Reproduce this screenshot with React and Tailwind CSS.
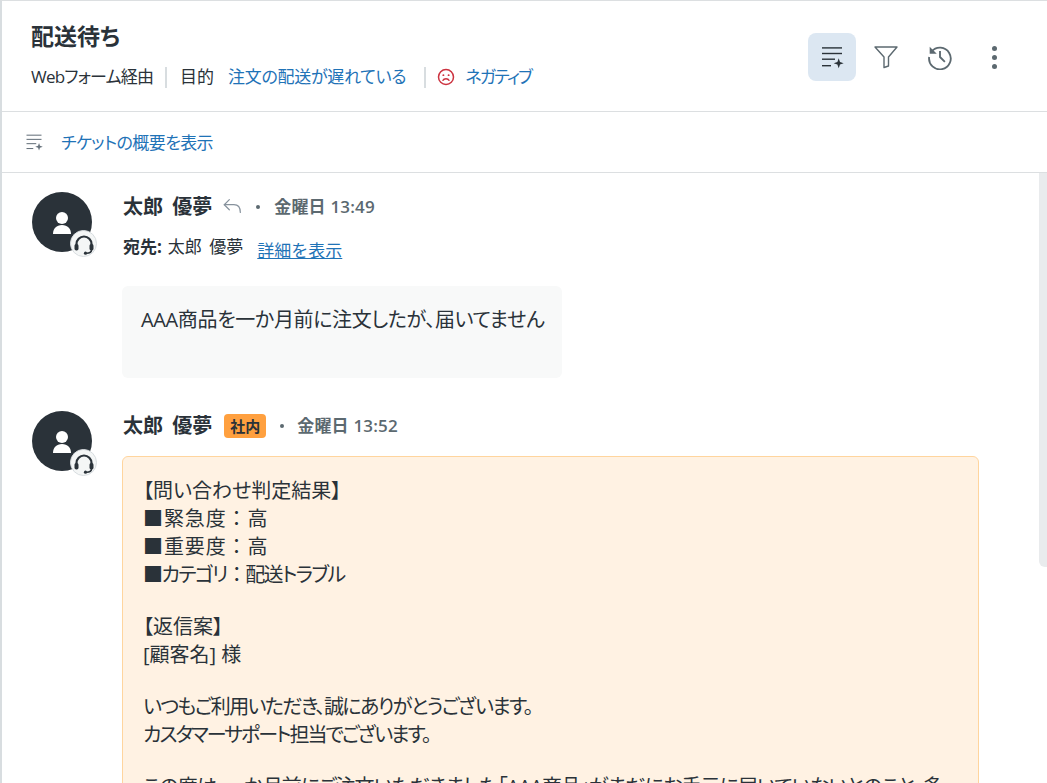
const jp = '[font-family:"Open_Sans","Noto_Sans_CJK_JP",sans-serif] [font-feature-settings:"palt"]';

function SummaryIcon({ className }) {
  return (
    <svg viewBox="0 0 24 24" className={className} fill="currentColor">
      <rect x="2" y="2.200" width="20" height="1.400" />
      <rect x="2" y="7.800" width="20" height="1.400" />
      <rect x="2" y="13.500" width="13" height="1.400" />
      <rect x="2" y="20" width="9" height="1.400" />
      <path d="M18.700 13.300l1.300 3.700 3.700 1.300-3.700 1.300-1.300 3.700-1.300-3.700-3.700-1.300 3.700-1.300z" />
    </svg>
  );
}

function Avatar() {
  return (
    <div className="relative w-[60px] h-[60px] rounded-full bg-[#2a3239] flex items-center justify-center shrink-0">
      <svg viewBox="0 0 24 24" className="w-[24px] h-[24px] mt-[1px]" fill="#fff">
        <circle cx="12" cy="7" r="6" />
        <path d="M3 23c0-5.500 3.500-9 9-9s9 3.500 9 9z" />
      </svg>
      <div className="absolute left-[38px] top-[38px] w-[27px] h-[27px] rounded-full bg-[#f4f6f6] border border-[#d8dde0] flex items-center justify-center">
        <svg viewBox="0 0 24 24" className="w-[24px] h-[24px]" fill="none" stroke="#2a3239" strokeWidth="2.200">
          <path d="M4.500 15v-3a7.500 7.500 0 0 1 15 0v3" />
          <rect x="2.500" y="12" width="4" height="6.500" rx="1.800" fill="#2a3239" stroke="none" />
          <rect x="17.500" y="12" width="4" height="6.500" rx="1.800" fill="#2a3239" stroke="none" />
          <path d="M19.500 18c0 2.200-2 3.200-5 3.200" strokeWidth="1.600" />
          <circle cx="13.500" cy="21.200" r="1.600" fill="#2a3239" stroke="none" />
        </svg>
      </div>
    </div>
  );
}

const Colon = () => <span className="[font-feature-settings:normal]">：</span>;

export default function App() {
  return (
    <div className={`${jp} w-[1047px] h-[783px] overflow-hidden bg-white border-t border-t-[#dcdfe1] border-l-2 border-l-[#d8dde0] flex flex-col text-[#2a3239]`}>
      <div className="h-[111px] shrink-0 border-b border-[#dcdfe1] flex justify-between pl-[29px] pr-[29px]">
        <div>
          <h1 className="mt-[19px] text-[23px] leading-[33px] font-bold">配送待ち</h1>
          <div className="mt-[11px] flex items-center text-[17px] leading-[26px] whitespace-nowrap">
            <span className="tracking-[-0.8px]">Webフォーム経由</span>
            <span className="w-[2px] h-[21px] bg-[#d8dde0] ml-[12px] mr-[13px]"></span>
            <span>目的</span>
            <span className="ml-[14px] text-[#1f73b7] tracking-[-0.3px]">注文の配送が遅れている</span>
            <span className="w-[2px] h-[21px] bg-[#d8dde0] ml-[18px] mr-[11px]"></span>
            <svg viewBox="0 0 24 24" className="w-[18px] h-[18px]" fill="none" stroke="#cc3340" strokeWidth="2">
              <circle cx="12" cy="12" r="10" />
              <path d="M7.500 17c1-1.800 2.600-2.800 4.500-2.800s3.500 1 4.500 2.800" />
              <circle cx="8.500" cy="9.500" r="1.300" fill="#cc3340" stroke="none" />
              <circle cx="15.500" cy="9.500" r="1.300" fill="#cc3340" stroke="none" />
            </svg>
            <span className="ml-[10px] text-[#1f73b7] tracking-[-1.8px]">ネガティブ</span>
          </div>
        </div>
        <div className="mt-[32px] flex items-start">
          <button className="w-[48px] h-[48px] rounded-[8px] bg-[#dce7f2] flex items-center justify-center text-[#2a3239]">
            <SummaryIcon className="w-[24px] h-[24px]" />
          </button>
          <button className="w-[48px] h-[48px] ml-[6px] flex items-center justify-center text-[#5c6970]">
            <svg viewBox="0 0 24 24" className="w-[24px] h-[24px]" fill="none" stroke="currentColor" strokeWidth="1.400" strokeLinejoin="round">
              <path d="M1 2h22l-8.500 10v9l-4.500 1.500V12z" />
            </svg>
          </button>
          <button className="w-[48px] h-[48px] ml-[6px] flex items-center justify-center text-[#5c6970]">
            <svg viewBox="0 0 24 24" className="w-[26px] h-[26px]" fill="none" stroke="currentColor" strokeWidth="1.700">
              <path d="M4.200 7A10 10 0 1 1 2 12" />
              <path d="M2.500 2.500v6.500h6.500z" fill="currentColor" stroke="none" />
              <path d="M12 6.500V12l4.500 4.500" />
            </svg>
          </button>
          <button className="w-[48px] h-[48px] ml-[6px] flex flex-col items-center justify-center gap-[4px]">
            <span className="w-[5px] h-[5px] rounded-full bg-[#5c6970]"></span>
            <span className="w-[5px] h-[5px] rounded-full bg-[#5c6970]"></span>
            <span className="w-[5px] h-[5px] rounded-full bg-[#5c6970]"></span>
          </button>
        </div>
      </div>
      <div className="h-[61px] shrink-0 border-b border-[#dcdfe1] flex items-center pl-[23px]">
        <SummaryIcon className="w-[18px] h-[18px] text-[#68737d]" />
        <span className="ml-[18px] mt-[2px] text-[17px] leading-[24px] text-[#1f73b7] tracking-[-0.6px]">チケットの概要を表示</span>
      </div>
      <div className="flex-1 min-h-0 relative overflow-hidden pl-[30px] pt-[19px]">
        <div className="absolute right-0 top-0 w-[8px] h-[394px] rounded-bl-[6px] bg-[#e9ebed]"></div>
        <div className="flex">
          <Avatar />
          <div className="ml-[30px]">
            <div className="flex items-center h-[30px] pl-[1px]">
              <span className="text-[20px] font-bold [font-feature-settings:normal] [word-spacing:4px]">太郎 優夢</span>
              <svg viewBox="0 0 24 24" className="ml-[10px] w-[22px] h-[22px]" fill="none" stroke="#87929d" strokeWidth="1.300" strokeLinecap="round" strokeLinejoin="round">
                <path d="M8 4L2.500 9.500 8 15" />
                <path d="M2.500 9.500H13c4.500 0 7 3 7 8.500" />
              </svg>
              <span className="ml-[12px] w-[4px] h-[4px] rounded-full bg-[#5c6970]"></span>
              <span className="ml-[14px] text-[17px] font-semibold text-[#5c6970] tracking-[0.2px]">金曜日 13:49</span>
            </div>
            <div className="mt-[13px] flex items-center h-[24px] text-[17px] pl-[1px] [font-feature-settings:normal]">
              <span className="font-bold">宛先:</span>
              <span className="ml-[6px] [word-spacing:3px]">太郎 優夢</span>
              <a className="ml-[14px] mt-[8px] text-[#1f73b7] underline">詳細を表示</a>
            </div>
            <div className="mt-[27px] w-[440px] h-[92px] rounded-[6px] bg-[#f8f9f9] pl-[19px] pt-[20px] text-[20px] leading-[28px] tracking-[-0.36px]">
              AAA商品を一か月前に注文したが、届いてません
            </div>
          </div>
        </div>
        <div className="flex mt-[33px]">
          <Avatar />
          <div className="ml-[30px]">
            <div className="flex items-center h-[30px] pl-[1px]">
              <span className="text-[20px] font-bold [font-feature-settings:normal] [word-spacing:4px]">太郎 優夢</span>
              <span className="ml-[12px] w-[42px] h-[24px] rounded-[4px] bg-[#ffa03f] text-[15px] font-semibold flex items-center justify-center">社内</span>
              <span className="ml-[14px] w-[4px] h-[4px] rounded-full bg-[#5c6970]"></span>
              <span className="ml-[13px] text-[17px] font-semibold text-[#5c6970] tracking-[0.2px]">金曜日 13:52</span>
            </div>
            <div className="mt-[15px] w-[857px] rounded-[6px] border border-[#ffd59e] bg-[#fff2e3] pl-[20px] pt-[20px] pb-[40px] text-[20px] leading-[28px] whitespace-nowrap">
              <p>【問い合わせ判定結果】</p>
              <p className="tracking-[0.9px]">■緊急度<Colon />高</p>
              <p className="tracking-[0.9px]">■重要度<Colon />高</p>
              <p className="tracking-[-1.6px]">■カテゴリ<Colon />配送トラブル</p>
              <p className="mt-[24px]">【返信案】</p>
              <p>[顧客名] 様</p>
              <p className="mt-[24px] tracking-[-1.6px]">いつもご利用いただき、誠にありがとうございます。</p>
              <p className="tracking-[-2px]">カスタマーサポート担当でございます。</p>
              <p className="mt-[24px] tracking-[-0.9px]">この度は、一か月前にご注文いただきました「AAA商品」がまだにお手元に届いていないとのこと、多</p>
            </div>
          </div>
        </div>
      </div>
    </div>
  );
}
